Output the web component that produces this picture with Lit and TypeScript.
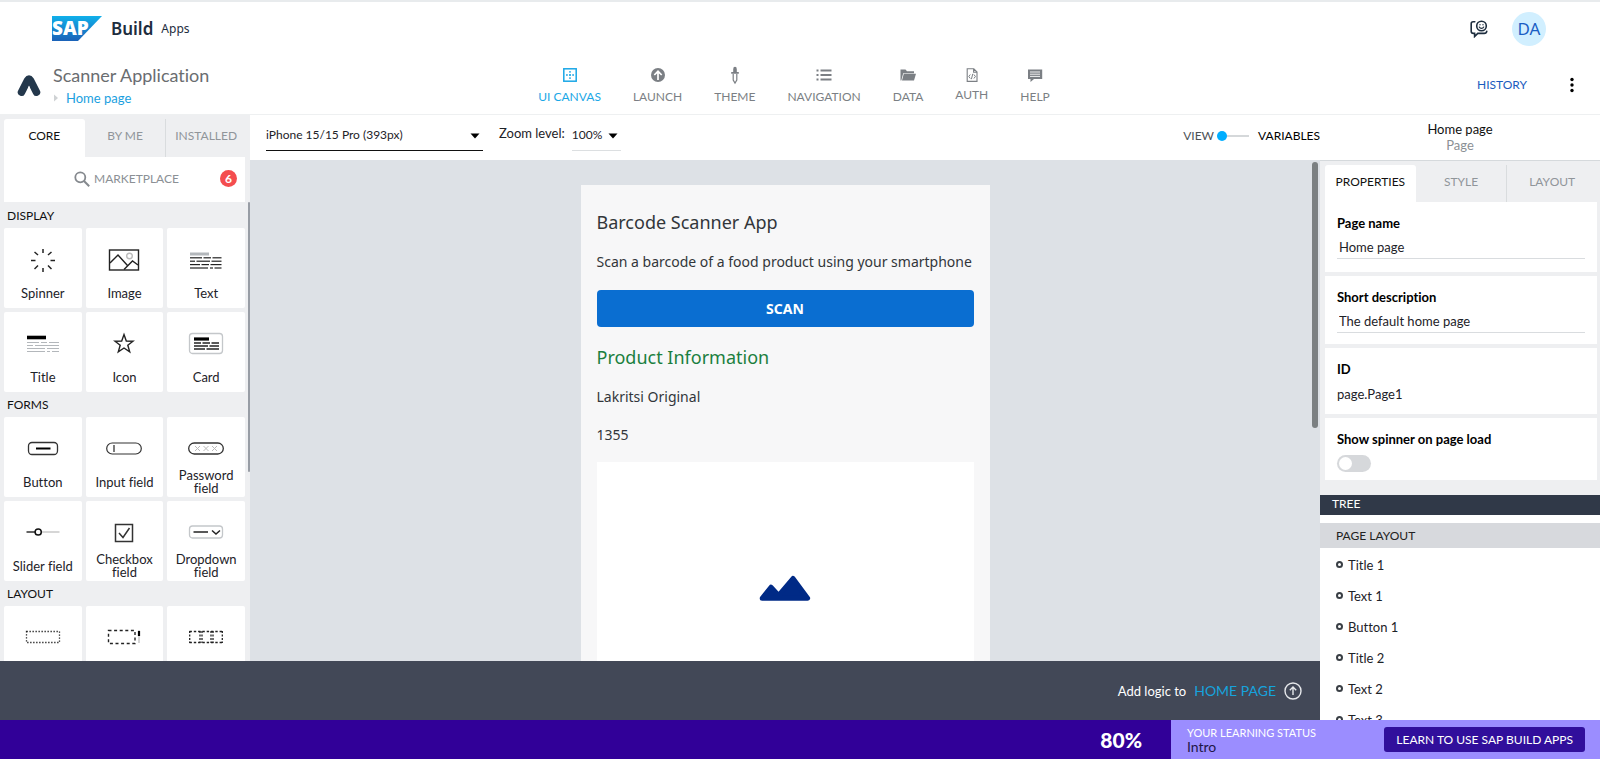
import { LitElement, html, svg, css } from "lit";
import { customElement, state } from "lit/decorators.js";

const line = (x1: number, y1: number, x2: number, y2: number, w = 1.5, c = "#222") =>
  svg`<line x1=${x1} y1=${y1} x2=${x2} y2=${y2} stroke=${c} stroke-width=${w} />`;

const tileIcons: Record<string, unknown> = {
  spinner: svg`<g>
    ${line(18, 5, 18, 9)}${line(18, 24, 18, 28)}${line(6, 16.5, 10.5, 16.5)}${line(25.5, 16.5, 30, 16.5)}
    ${line(9.5, 8, 13, 11)}${line(26.5, 8, 23, 11)}${line(9.5, 25, 13, 21.5)}${line(26.5, 25, 23, 21.5)}</g>`,
  image: svg`<g fill="none" stroke="#222" stroke-width="1.4">
    <rect x="3.5" y="6" width="29" height="20" />
    <path d="M4 19 L12 11 L21.5 21.5 M18 25.5 L26.5 17 L32 21" />
    <circle cx="23.5" cy="12" r="2.8" stroke="#bbb" /></g>`,
  text: svg`<g>${line(2, 10, 21, 10, 3, "#b3b7bb")}
    ${line(2, 13.8, 14, 13.8, 1.2)}${line(15.5, 13.8, 23, 13.8, 1.2)}${line(24.5, 13.8, 33.5, 13.8, 1.2)}
    ${line(2, 17.2, 7, 17.2, 1.2)}${line(8.5, 17.2, 22, 17.2, 1.2)}${line(23.5, 17.2, 33.5, 17.2, 1.2)}
    ${line(2, 20.6, 12, 20.6, 1.2)}${line(13.5, 20.6, 21, 20.6, 1.2)}${line(22.5, 20.6, 33.5, 20.6, 1.2)}
    ${line(2, 24, 20, 24, 1.2)}${line(22, 24, 25, 24, 1.2)}${line(26.5, 24, 33.5, 24, 1.2)}</g>`,
  title: svg`<g>${line(2, 9.5, 21, 9.5, 3.6, "#000")}
    ${line(2, 14.5, 14, 14.5, 1, "#b3b7bb")}${line(16, 14.5, 22, 14.5, 1, "#b3b7bb")}${line(24, 14.5, 34, 14.5, 1, "#b3b7bb")}
    ${line(2, 17.5, 8, 17.5, 1, "#b3b7bb")}${line(10, 17.5, 34, 17.5, 1, "#b3b7bb")}
    ${line(2, 20.5, 20, 20.5, 1, "#b3b7bb")}${line(22, 20.5, 34, 20.5, 1, "#b3b7bb")}
    ${line(2, 23.5, 20, 23.5, 1, "#b3b7bb")}${line(22, 23.5, 25, 23.5, 1, "#b3b7bb")}${line(27, 23.5, 34, 23.5, 1, "#b3b7bb")}</g>`,
  star: svg`<path d="M18 6.5 L20.3 13 L27 13.2 L21.8 17.2 L23.7 23.8 L18 20 L12.3 23.8 L14.2 17.2 L9 13.2 L15.7 13 Z" fill="none" stroke="#222" stroke-width="1.4" />`,
  card: svg`<g><rect x="1.5" y="5.5" width="33" height="20" rx="3" fill="none" stroke="#c4c7ca" stroke-width="1.3" />
    ${line(6, 11, 21, 11, 3.2, "#000")}
    ${line(6, 15, 13, 15)}${line(14.5, 15, 22, 15)}${line(23.5, 15, 31, 15)}
    ${line(6, 18, 20, 18)}${line(21.5, 18, 31, 18)}
    ${line(6, 21, 17, 21)}${line(18.5, 21, 31, 21)}</g>`,
  button: svg`<g><rect x="3.5" y="9.5" width="29" height="12" rx="3.5" fill="none" stroke="#333" stroke-width="1.3" />${line(11, 15.5, 25.5, 15.5, 2, "#000")}</g>`,
  input: svg`<g><rect x="0.7" y="10" width="34.6" height="11" rx="5.5" fill="none" stroke="#333" stroke-width="1.2" />${line(8, 12, 8, 19, 1.2)}</g>`,
  password: svg`<g fill="none"><rect x="0.7" y="10" width="34.6" height="11" rx="5.5" stroke="#333" stroke-width="1.3" />
    <path d="M7 13l5 5m0-5l-5 5M15.5 13l5 5m0-5l-5 5M24 13l5 5m0-5l-5 5" stroke="#bbb" /></g>`,
  slider: svg`<g>${line(1.5, 15, 10, 15, 1.4)}${line(17, 15, 34.5, 15, 1.2, "#bbb")}<circle cx="13.2" cy="15" r="3.1" fill="#fff" stroke="#111" stroke-width="1.5" /></g>`,
  checkbox: svg`<g fill="none" stroke="#333"><rect x="9.5" y="7.5" width="17" height="17" stroke-width="1.5" /><path d="M13 16 L17 20.5 L23.5 11" stroke-width="1.5" /></g>`,
  dropdown: svg`<g fill="none"><rect x="1.5" y="9" width="33" height="12" rx="3" stroke="#c4c7ca" stroke-width="1.3" />${line(5.5, 15, 20, 15)}<path d="M24 13.5l4 3.5 4-3.5" stroke="#222" stroke-width="1.5" /></g>`,
  container: svg`<rect x="1.5" y="9.5" width="33" height="11" fill="none" stroke="#222" stroke-width="1.3" stroke-dasharray="1.3 1.7" />`,
  scroll: svg`<g fill="none"><rect x="2.5" y="8.5" width="26.5" height="13" stroke="#222" stroke-width="1.4" stroke-dasharray="3 2.6" />${line(33, 8, 33, 21, 1.2, "#bbb")}${line(33, 9, 33, 14, 2.2, "#000")}</g>`,
  row: svg`<g fill="none" stroke="#222" stroke-width="1.6"><path d="M1.5 9.5h33M1.5 20.5h33" stroke-dasharray="2.4 1.9" /><path d="M1.7 9v12M12 9v12M14 9v12M23 9v12M25 9v12M34.3 9v12" stroke-width="1.3" stroke-dasharray="2 1.5" /></g>`,
};

const navIcons: Record<string, unknown> = {
  canvas: svg`<g fill="none" stroke="currentColor"><rect x="3.8" y="3.8" width="12.4" height="12.4" stroke-width="1.5" /><path d="M10 6v8M6 10h8" stroke-width="1.4" stroke-dasharray="1.8 1.3" /></g>`,
  launch: svg`<g><circle cx="10" cy="10" r="7" fill="currentColor" /><path d="M10 15V6.5M6.3 10L10 6.3 13.7 10" fill="none" stroke="#fff" stroke-width="1.7" /></g>`,
  theme: svg`<g><path d="M8.2 4.2a1.8 2.4 0 0 1 3.6 0V7h2v1.8H6.2V7h2z" fill="currentColor" /><path d="M8.2 9v6l1.8 3 1.8-3V9" fill="none" stroke="currentColor" stroke-width="1.2" /></g>`,
  list: svg`<g fill="currentColor"><path d="M2.5 4.5h2v2h-2zM2.5 9h2v2h-2zM2.5 13.5h2v2h-2z" /><path d="M6.5 4.5h11v2h-11zM6.5 9h11v2h-11zM6.5 13.5h11v2h-11z" /></g>`,
  folder: svg`<g fill="currentColor"><path d="M2.5 4.5h5l1.5 1.7h7v2H5.2L3.3 15.5h-.8z" /><path d="M5.8 8.8H18l-2 6.8H4z" /></g>`,
  auth: svg`<g fill="none" stroke="currentColor"><path d="M5.2 3.8h6.6l3.2 3.2v9.4H5.2z M11.6 3.8v3.5H15" stroke-width="1.1" /><path d="M8.3 9.5L6.8 11.5l1.5 2M11.9 9.5l1.5 2-1.5 2M10.8 8.8l-1.4 5.4" stroke-width="1" /></g>`,
  chat: svg`<g><path d="M3 4.5h14.2v9.5H9l-3.5 3V14H3z" fill="currentColor" /><path d="M5 7h10M5 9.2h10M5 11.4h10" stroke="#fff" stroke-width="0.9" /></g>`,
};

@customElement("app-root")
export class AppRoot extends LitElement {
  @state() private spinner = false;

  private nav = [
    { label: "UI CANVAS", icon: "canvas", active: true },
    { label: "LAUNCH", icon: "launch" },
    { label: "THEME", icon: "theme" },
    { label: "NAVIGATION", icon: "list" },
    { label: "DATA", icon: "folder" },
    { label: "AUTH", icon: "auth", raised: true },
    { label: "HELP", icon: "chat" },
  ];

  private sections = [
    { title: "DISPLAY", tiles: [["Spinner", "spinner"], ["Image", "image"], ["Text", "text"], ["Title", "title"], ["Icon", "star"], ["Card", "card"]] },
    { title: "FORMS", tiles: [["Button", "button"], ["Input field", "input"], ["Password field", "password"], ["Slider field", "slider"], ["Checkbox field", "checkbox"], ["Dropdown field", "dropdown"]] },
    { title: "LAYOUT", tiles: [["", "container"], ["", "scroll"], ["", "row"]] },
  ];

  private tree = ["Title 1", "Text 1", "Button 1", "Title 2", "Text 2", "Text 3"];

  static styles = css`
    :host {
      display: flex;
      flex-direction: column;
      height: 100vh;
      overflow: hidden;
      box-sizing: border-box;
      border-top: 2px solid #e8ebed;
      font-family: Lato, "Open Sans", sans-serif;
      font-size: 13px;
      font-variant-ligatures: none;
      line-height: 16px;
      color: #1d2228;
      background: #fff;
    }
    *, *::before { box-sizing: border-box; }
    svg { display: block; flex: none; }
    button, input, select { font: inherit; color: inherit; margin: 0; }
    button { border: 0; background: none; padding: 0; cursor: pointer; }
    a { text-decoration: none; }
    h1, h2, p, ul { margin: 0; padding: 0; font-weight: 400; list-style: none; }

    .top { display: flex; align-items: center; height: 54px; flex: none; padding: 0 54px 1px 52px; color: #1d2d3e; }
    .sap { font: 900 19px "Open Sans", sans-serif; fill: #fff; }
    .build { margin-left: 9px; font: 600 17px/24px "Noto Sans", sans-serif; }
    .apps { margin-left: 8px; font: 400 12px/24px "Noto Sans", sans-serif; }
    .feedback { margin-left: auto; margin-right: 24px; }
    .avatar { width: 34px; height: 34px; border-radius: 50%; background: #d1efff; color: #1b5ec4; font: 400 17px/34px "Noto Sans", sans-serif; text-align: center; }

    .appbar { display: grid; grid-template-columns: 1fr auto 1fr; height: 59px; flex: none; border-bottom: 1px solid #eef0f1; }
    .ident { display: flex; align-items: center; gap: 12px; padding: 2px 0 0 17px; }
    .ident h1 { font-size: 18px; line-height: 24px; color: #6a6d70; }
    .crumb { display: flex; align-items: center; gap: 7px; line-height: 22px; color: #1b9fe0; }
    .nav { display: flex; gap: 32px; padding-right: 12px; }
    .nav button { display: flex; flex-direction: column; align-items: center; gap: 4px; padding-top: 9px; color: #7b7f84; font-size: 12px; }
    .nav button.active { color: #1ba7e6; }
    .nav button.raised { gap: 2px; }
    .nav button span { white-space: nowrap; }
    .tools { display: flex; align-items: center; justify-content: flex-end; gap: 37px; padding-right: 20px; }
    .history { color: #1b5cbe; font-size: 12px; }

    .work { display: grid; grid-template-columns: minmax(0, 1fr) 280px; flex: 1; min-height: 0; }
    .main { display: grid; grid-template-columns: 250px minmax(0, 1fr); grid-template-rows: minmax(0, 1fr) 59px; min-height: 0; }

    .tabs { display: grid; grid-template-columns: repeat(3, 1fr); flex: none; color: #90959a; font-size: 12px; }
    .tabs button { display: flex; align-items: center; justify-content: center; }
    .tabs button.on { background: #fff; color: #111; border-radius: 3px 3px 0 0; }
    .tabs button:last-child { border-left: 1px solid #d9dcde; }

    .left { position: relative; display: flex; flex-direction: column; background: #eeeff1; min-height: 0; overflow: hidden; }
    .left .tabs { height: 42px; padding: 4px 4px 0 4px; }
    .left .tabs button { height: 38px; padding-bottom: 4px; }
    .market { display: flex; align-items: center; flex: none; height: 45px; margin: 0 5px 0 4px; padding: 0 8px 2px 70px; gap: 4px; background: #fff; color: #8b9095; font-size: 12px; }
    .badge { margin-left: auto; width: 17px; height: 17px; border-radius: 50%; background: #f44d4f; color: #fff; font-weight: 700; line-height: 17px; text-align: center; }
    .palette { flex: 1; min-height: 0; overflow: hidden; padding: 1px 5px 0 4px; }
    .palette h2 { height: 25px; padding: 5px 3px 0; font-size: 12px; line-height: 16px; color: #111; }
    .tiles { display: grid; grid-template-columns: repeat(3, 1fr); gap: 4px; }
    .tile { display: flex; flex-direction: column; align-items: center; height: 80px; padding-top: 16px; border-radius: 2px; background: #fff; }
    .tile span { display: flex; align-items: center; height: 26px; margin-top: 4px; line-height: 13px; max-width: 64px; text-align: center; }
    .tile.wide span { max-width: none; white-space: nowrap; }
    .thumb { position: absolute; border-radius: 3px; }
    .left .thumb { right: 0; top: 87px; width: 2px; height: 270px; background: #989da5; }

    .center { display: flex; flex-direction: column; min-height: 0; min-width: 0; }
    .toolbar { display: flex; align-items: flex-start; height: 45px; flex: none; padding-left: 16px; }
    .pick { display: grid; align-items: center; height: 36px; border-bottom: 1px solid #dcdfe1; }
    .pick > * { grid-area: 1 / 1; }
    .pick svg { justify-self: end; pointer-events: none; margin: 6px 3px 0 0; }
    .pick select { appearance: none; border: 0; background: none; width: 100%; height: 35px; padding: 5px 0 0; outline: 0; font-size: 12px; line-height: 16px; }
    .device { width: 217px; border-color: #111; }
    .zoom { width: 49px; }
    .toolbar label { display: flex; align-items: center; }
    .zoomlabel { margin-left: 16px; gap: 7px; line-height: 42px; height: 36px; }
    .mode { margin-left: auto; height: 42px; gap: 3px; font-size: 12px; }
    .mode span:last-child { color: #000; margin-left: 6px; }
    .mode span { color: #4c5156; }
    .mode input { appearance: none; width: 32px; height: 12px; background: linear-gradient(#d5d8da, #d5d8da) center / 100% 2px no-repeat; }
    .mode input::-webkit-slider-thumb { appearance: none; width: 10px; height: 10px; border-radius: 50%; background: #00aeff; }
    .stage { position: relative; flex: 1; min-height: 0; overflow: hidden; background: #dde1e6; padding-top: 25px; }
    .stage .thumb { right: 2px; top: 2px; width: 6px; height: 266px; background: #7b8082; }
    .phone { width: 409px; margin: 0 auto; padding: 23px 16px 0; background: #f7f7f8; color: #32363a; font-family: "Noto Sans", sans-serif; font-size: 14px; }
    .phone h2 { font-size: 18px; line-height: 28px; margin-bottom: 7px; }
    .phone p { line-height: 38px; }
    .phone h2.product { color: #1b7f3f; margin-top: 16px; }
    .scan { display: block; width: 100%; height: 37px; margin-top: 9px; border-radius: 4px; background: #0a6ed1; color: #fff; font-weight: 700; }
    .picture { display: flex; justify-content: center; height: 377px; margin-top: 8px; padding-top: 113px; background: #fff; }

    .logic { grid-column: 1 / 3; display: flex; align-items: center; justify-content: flex-end; gap: 8px; padding-right: 18px; background: #424857; color: #fff; }
    .logic a { color: #16a3dd; font-size: 14px; }

    .right { display: flex; flex-direction: column; min-height: 0; background: #eeeff1; }
    .who { height: 46px; flex: none; padding-top: 6px; background: #fff; border-bottom: 1px solid #d5d9dc; text-align: center; color: #111; }
    .who p:last-child { color: #8b9095; }
    .right .tabs { height: 41px; padding: 4px 3px 0 5px; }
    .right .tabs button { height: 37px; padding-bottom: 4px; }
    .cards { display: grid; gap: 4px; margin: 0 3px 15px 5px; flex: none; }
    .field { display: grid; align-content: start; padding: 13px 12px 0; background: #fff; min-height: 68px; }
    .field.first { min-height: 70px; }
    .field label, .field h2 { font-size: 13px; line-height: 16px; font-weight: 700; color: #000; }
    .field input.textbox { width: 100%; height: 24px; margin-top: 4px; border: 0; border-bottom: 1px solid #d9dcdf; outline: 0; padding: 0 2px; background: none; }
    .field.id { min-height: 66px; }
    .field.id p { margin-top: 9px; }
    .field.toggle { min-height: 62px; }
    .switch { appearance: none; width: 34px; height: 17px; margin-top: 8px; border-radius: 9px; background: #d6d8db; display: flex; align-items: center; padding: 0 2px; }
    .switch::before { content: ""; width: 13px; height: 13px; border-radius: 50%; background: #fff; }
    .switch:checked { justify-content: flex-end; background: #00aeff; }
    .treebar { flex: none; height: 20px; padding-left: 12px; background: #303948; color: #fff; font-size: 12px; line-height: 18px; }
    .tree { flex: 1; min-height: 0; overflow: hidden; padding-top: 8px; background: #fff; }
    .tree h2 { padding-left: 16px; background: #d7d9dd; font-size: 12px; line-height: 25px; color: #222; }
    .tree li { display: flex; align-items: center; gap: 5px; height: 31px; padding-left: 16px; }
    .tree li::before { content: ""; width: 7px; height: 7px; border: 2px solid #3a3f45; border-radius: 50%; }
    .tree ul { padding-top: 1px; }

    .learn { display: flex; flex: none; height: 39px; background: #9b8dff; }
    .progress { flex: 1; display: flex; align-items: center; justify-content: flex-end; padding-right: 29px; background: #310098; color: #fff; font-size: 21px; font-weight: 900; }
    .status { width: 429px; flex: none; display: flex; align-items: center; justify-content: space-between; padding: 0 15px 0 16px; }
    .status p { font-size: 11px; line-height: 14px; color: #fff; }
    .status p:last-child { font-size: 14px; color: #1e1648; }
    .status button { height: 25px; padding: 0 12px; border-radius: 3px; background: #310f9c; color: #fff; font-size: 12px; }
  `;

  private arrow() {
    return html`<svg width="10" height="6" viewBox="0 0 10 6" aria-hidden="true"><path d="M0.5 0.5h9L5 5.5z" fill="#000" /></svg>`;
  }

  render() {
    return html`
      <header class="top">
        <svg width="50" height="25" viewBox="0 0 50 25" role="img" aria-label="SAP">
          <defs><linearGradient id="g" x1="0" y1="0" x2="0" y2="1"><stop offset="0" stop-color="#10b0ea" /><stop offset="1" stop-color="#1b62b8" /></linearGradient></defs>
          <path d="M0 0h50L26 25H0z" fill="url(#g)" />
          <text class="sap" x="0" y="19">SAP</text>
        </svg>
        <span class="build">Build</span><span class="apps">Apps</span>
        <button class="feedback" aria-label="Feedback">
          <svg width="18" height="18" viewBox="0 0 18 18" fill="none" stroke="#1d2d3e" stroke-width="1.6" stroke-linecap="round">
            <circle cx="11.5" cy="6" r="4.8" />
            <path d="M4.8 1.8H3.2C2 1.8 1.2 2.6 1.2 3.8v7.4c0 1.4.8 2.2 2.2 2.2h1.2V16.5l3.2-3.1h6.4c1.5 0 2.4-.8 2.6-2.2" />
            <path d="M9.3 7c.8 1.7 3.6 1.7 4.4 0" stroke-width="1.2" />
            <path d="M10 4.6v.2M13 4.6v.2" stroke-width="1.3" />
          </svg>
        </button>
        <div class="avatar">DA</div>
      </header>

      <div class="appbar">
        <div class="ident">
          <svg width="24" height="22" viewBox="0 0 24 22"><path d="M4.5 17.2L10.6 5.2Q12 3 13.4 5.2L19.5 17.2" fill="none" stroke="#24384c" stroke-width="7.5" stroke-linecap="round" stroke-linejoin="round" /><path d="M12 10.5L8 22h8z" fill="#fff" /></svg>
          <div>
            <h1>Scanner Application</h1>
            <a class="crumb" href="#"><svg width="6" height="8" viewBox="0 0 6 8"><path d="M1 0.5L5 4 1 7.5z" fill="#cfd2d4" /></svg>Home page</a>
          </div>
        </div>
        <nav class="nav">
          ${this.nav.map((n) => html`<button class="${n.active ? "active" : n.raised ? "raised" : ""}">
            <svg width="20" height="20" viewBox="0 0 20 20">${navIcons[n.icon]}</svg><span>${n.label}</span></button>`)}
        </nav>
        <div class="tools">
          <button class="history">HISTORY</button>
          <button aria-label="More"><svg width="16" height="16" viewBox="0 0 16 16"><circle cx="8" cy="2.5" r="1.7" /><circle cx="8" cy="8" r="1.7" /><circle cx="8" cy="13.5" r="1.7" /></svg></button>
        </div>
      </div>

      <div class="work">
        <div class="main">
          <aside class="left">
            <div class="tabs"><button class="on">CORE</button><button>BY ME</button><button>INSTALLED</button></div>
            <button class="market">
              <svg width="16" height="16" viewBox="0 0 16 16" fill="none" stroke="#85898e" stroke-width="1.8"><circle cx="6.3" cy="6.3" r="5" /><path d="M10 10l5.2 5.2" stroke-width="2" /></svg>
              MARKETPLACE <span class="badge">6</span>
            </button>
            <div class="palette">
              ${this.sections.map((s) => html`<section><h2>${s.title}</h2><div class="tiles">
                ${s.tiles.map(([name, icon]) => html`<div class="tile ${name === "Slider field" || name === "Input field" ? "wide" : ""}">
                  <svg width="36" height="32" viewBox="0 0 36 32" aria-hidden="true">${tileIcons[icon]}</svg>${name ? html`<span>${name}</span>` : ""}</div>`)}
              </div></section>`)}
            </div>
            <div class="thumb"></div>
          </aside>

          <section class="center">
            <div class="toolbar">
              <div class="pick device"><select aria-label="Device"><option>iPhone 15/15 Pro (393px)</option></select>${this.arrow()}</div>
              <label class="zoomlabel">Zoom level: <span class="pick zoom"><select><option>100%</option></select>${this.arrow()}</span></label>
              <label class="mode"><span>VIEW</span><input type="range" min="0" max="1" value="0" /><span>VARIABLES</span></label>
            </div>
            <div class="stage">
              <div class="phone">
                <h2>Barcode Scanner App</h2>
                <p>Scan a barcode of a food product using your smartphone</p>
                <button class="scan">SCAN</button>
                <h2 class="product">Product Information</h2>
                <p>Lakritsi Original</p>
                <p>1355</p>
                <div class="picture"><svg width="52" height="26" viewBox="0 0 52 26"><path d="M3.2 23.2L12 12.2 19.5 20.5 34 3.5 48.6 23.2z" fill="#002a86" stroke="#002a86" stroke-width="5" stroke-linejoin="round" /></svg></div>
              </div>
              <div class="thumb"></div>
            </div>
          </section>

          <div class="logic">
            <span>Add logic to</span><a href="#">HOME PAGE</a>
            <svg width="18" height="18" viewBox="0 0 18 18" fill="none" stroke="#e6e8eb" stroke-width="1.4"><circle cx="9" cy="9" r="8" /><path d="M9 13V5.2M5.8 8.2L9 5l3.2 3.2" /></svg>
          </div>
        </div>

        <aside class="right">
          <div class="who"><p>Home page</p><p>Page</p></div>
          <div class="tabs"><button class="on">PROPERTIES</button><button>STYLE</button><button>LAYOUT</button></div>
          <div class="cards">
            <div class="field first"><label for="pn">Page name</label><input class="textbox" id="pn" value="Home page" /></div>
            <div class="field"><label for="sd">Short description</label><input class="textbox" id="sd" value="The default home page" /></div>
            <div class="field id"><h2>ID</h2><p>page.Page1</p></div>
            <div class="field toggle"><label for="sp">Show spinner on page load</label>
              <input class="switch" id="sp" type="checkbox" .checked=${this.spinner} @change=${(e: Event) => (this.spinner = (e.target as HTMLInputElement).checked)} /></div>
          </div>
          <div class="treebar">TREE</div>
          <div class="tree"><h2>PAGE LAYOUT</h2><ul>${this.tree.map((t) => html`<li>${t}</li>`)}</ul></div>
        </aside>
      </div>

      <footer class="learn">
        <div class="progress">80%</div>
        <div class="status"><div><p>YOUR LEARNING STATUS</p><p>Intro</p></div><button>LEARN TO USE SAP BUILD APPS</button></div>
      </footer>
    `;
  }
}
